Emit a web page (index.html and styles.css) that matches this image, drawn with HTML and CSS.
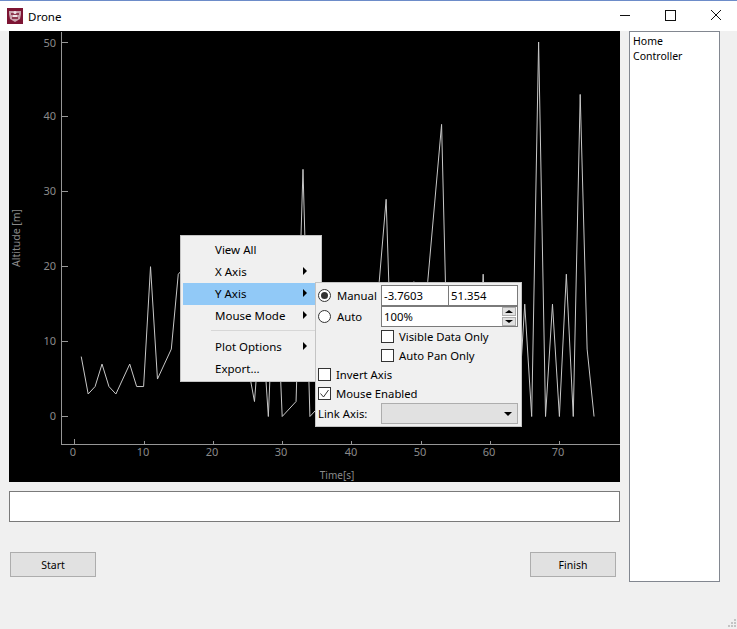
FILE: index.html
```html
<!DOCTYPE html>
<html lang="en">

<head>
  <meta charset="UTF-8">
  <title>Drone</title>
  <link rel="stylesheet" href="styles.css">
</head>

<body>
  <div class="titlebar">
    <svg class="app-icon" width="16" height="16" viewBox="0 0 16 16">
      <rect width="16" height="16" fill="#7d1433" />
      <path d="M2 3h12v3l-1 5-5 3-5-3-1-5z" fill="#c9a3ad" />
      <path d="M4 5h8v2H4zM5 9h6v2H5z" fill="#8f3a50" />
      <circle cx="8" cy="4.5" r="1.5" fill="#efe3e6" />
      <rect x="6" y="7" width="4" height="2" fill="#efe3e6" />
    </svg>
    <span class="title">Drone</span>
    <div class="controls">
      <svg width="46" height="30" viewBox="0 0 46 30"><path class="glyph" d="M19 14.5h10" /></svg>
      <svg width="46" height="30" viewBox="0 0 46 30"><path class="glyph" d="M18.5 9.5h10v10h-10z" /></svg>
      <svg width="46" height="30" viewBox="0 0 46 30"><path class="glyph" d="M18 9l10 10M28 9l-10 10" /></svg>
    </div>
  </div>

  <div class="content">
    <div class="main">
      <svg class="plot" width="611" height="451" viewBox="9 31 611 451">
        <g class="axis">
          <path d="M61.5 32V444.5H620" />
          <path d="M62 416.5h6M62 341.5h6M62 266.5h6M62 191.5h6M62 116.5h6M62 42.5h6" />
          <path d="M74.5 444v-5M144.5 444v-3M213.5 444v-3M282.5 444v-3M351.5 444v-3M421.5 444v-3M490.5 444v-3M559.5 444v-3" />
        </g>
        <g class="ticks-y">
          <text x="56" y="420">0</text>
          <text x="56" y="345">10</text>
          <text x="56" y="270">20</text>
          <text x="56" y="195">30</text>
          <text x="56" y="120">40</text>
          <text x="56" y="47">50</text>
        </g>
        <g class="ticks-x">
          <text x="73" y="456">0</text>
          <text x="143" y="456">10</text>
          <text x="212" y="456">20</text>
          <text x="281" y="456">30</text>
          <text x="351" y="456">40</text>
          <text x="420" y="456">50</text>
          <text x="489" y="456">60</text>
          <text x="558" y="456">70</text>
        </g>
        <text class="axis-label axis-label-x" x="337" y="479">Time[s]</text>
        <text class="axis-label axis-label-y" transform="translate(20 238) rotate(-90)">Altitude [m]</text>
        <!-- one point per second: time, altitude -->
        <polyline class="trace" transform="translate(74.3 416.5) scale(6.93 -7.49)"
          points="1,8 2,3 3,4 4,7 5,4 6,3 7,5 8,7 9,4 10,4 11,20 12,5 13,7 14,9 15,19 16,20 17,12 18,8 19,15 20,6 21,10 22,14 23,7 24,9 25,7 26,2 27,14 28,0 29,22 30,0 31,1 32,2 33,33 34,0 35,1 36,9 37,14 38,6 39,11 40,3 41,8 42,12 43,4 44,18 45,29 46,0 47,7 48,11 49,18 50,6 51,18 52,28.5 53,39 54,1 55,8 56,13 57,5 58,0 59,19 60,0 61,7 62,12 63,4 64,0 65,15 66,0 67,50 68,0 69,15 70,0 71,19 72,0 73,43 74,9 75,0" />
      </svg>
      <input class="command" type="text">
      <div class="buttons">
        <button class="btn">Start</button>
        <button class="btn">Finish</button>
      </div>
    </div>
    <ul class="sidebar">
      <li>Home</li>
      <li>Controller</li>
    </ul>
  </div>

  <div class="menu">
    <div class="menu-item">View All</div>
    <div class="menu-item has-sub">X Axis</div>
    <div class="menu-item has-sub active">Y Axis</div>
    <div class="menu-item has-sub">Mouse Mode</div>
    <div class="menu-sep"></div>
    <div class="menu-item has-sub">Plot Options</div>
    <div class="menu-item">Export...</div>
  </div>

  <div class="submenu">
    <label class="opt"><span class="radio on"></span>Manual</label>
    <div class="field">-3.7603</div>
    <div class="field field-max">51.354</div>

    <label class="opt"><span class="radio"></span>Auto</label>
    <div class="field field-spin">100%
      <span class="spin">
        <span class="spin-btn"><i class="tri-up"></i></span>
        <span class="spin-btn"><i class="tri-down"></i></span>
      </span>
    </div>

    <label class="opt opt-indent"><span class="check"></span>Visible Data Only</label>
    <label class="opt opt-indent"><span class="check"></span>Auto Pan Only</label>
    <label class="opt opt-wide"><span class="check"></span>Invert Axis</label>
    <label class="opt opt-wide">
      <span class="check">
        <svg width="13" height="13" viewBox="0 0 13 13"><path d="M2.5 6.5l3 3.5 5-7" fill="none" stroke="#333" /></svg>
      </span>Mouse Enabled
    </label>

    <span class="opt">Link Axis:</span>
    <div class="combo"><i class="tri-combo"></i></div>
  </div>

  <svg class="grip" width="10" height="10" viewBox="0 0 10 10">
    <path d="M7 1h2v2H7zM4 4h2v2H4zM7 4h2v2H7zM1 7h2v2H1zM4 7h2v2H4zM7 7h2v2H7z" fill="#c4c4c4" />
  </svg>
</body>

</html>
```

FILE: styles.css
```css
html,
body {
  margin: 0;
  height: 100%;
}

body {
  position: relative;
  overflow: hidden;
  background: #f0f0f0;
  color: #000;
  font: 12px "Noto Sans", sans-serif;
}

.titlebar {
  display: flex;
  align-items: center;
  height: 30px;
  background: #fff;
  border-top: 1px solid #6d8cc9;
}

.app-icon {
  margin-left: 7px;
}

.title {
  margin-left: 5px;
  font-size: 11.5px;
}

.controls {
  display: flex;
  margin-left: auto;
  margin-right: -2px;
}

.glyph {
  fill: none;
  stroke: #111;
  stroke-width: 1;
  shape-rendering: crispEdges;
}

.controls svg:last-child .glyph {
  shape-rendering: auto;
}

.content {
  display: flex;
  gap: 9px;
  padding-left: 9px;
}

.main {
  display: flex;
  flex-direction: column;
  width: 611px;
}

.plot {
  display: block;
  background: #000;
}

.axis path {
  fill: none;
  stroke: #969696;
  shape-rendering: crispEdges;
}

.ticks-y text,
.ticks-x text,
.axis-label {
  fill: #8a8a8a;
  font-size: 11px;
}

.ticks-y text {
  text-anchor: end;
}

.ticks-x text,
.axis-label {
  text-anchor: middle;
}

.axis-label-x {
  font-size: 10px;
}

.axis-label-y {
  font-size: 10.5px;
}

.trace {
  fill: none;
  stroke: #c8c8c8;
  stroke-width: 1;
  vector-effect: non-scaling-stroke;
  shape-rendering: crispEdges;
}

.command {
  box-sizing: border-box;
  width: 611px;
  height: 31px;
  margin-top: 9px;
  border: 1px solid #7a7a7a;
  background: #fff;
  outline: none;
}

.buttons {
  display: flex;
  justify-content: space-between;
  margin-top: 30px;
  padding: 0 4px 0 1px;
}

.btn {
  width: 86px;
  height: 25px;
  padding: 0;
  border: 1px solid #adadad;
  background: #e1e1e1;
  color: #000;
  font: inherit;
  font-size: 10.5px;
}

.sidebar {
  box-sizing: border-box;
  width: 91px;
  height: 551px;
  margin: 0;
  padding: 2px 3px;
  list-style: none;
  border: 1px solid #828790;
  background: #fff;
  font-size: 10.5px;
}

.sidebar li {
  height: 15px;
  line-height: 15px;
}

/* popup menu over the plot */
.menu {
  position: absolute;
  left: 180px;
  top: 235px;
  box-sizing: border-box;
  width: 142px;
  height: 147px;
  padding: 3px 2px;
  border: 1px solid #c4c4c4;
  background: #f0f0f0;
  font-size: 11.5px;
}

.menu-item {
  position: relative;
  height: 22px;
  padding-left: 32px;
  line-height: 22px;
}

.menu-item.active {
  background: #91c9f7;
}

.has-sub::after {
  content: "";
  position: absolute;
  right: 12px;
  top: 6px;
  border-left: 4px solid #000;
  border-top: 4px solid transparent;
  border-bottom: 4px solid transparent;
}

.menu-sep {
  height: 1px;
  margin: 3px -1px 5px 28px;
  background: #d7d7d7;
}

/* Y Axis options panel */
.submenu {
  position: absolute;
  left: 315px;
  top: 282px;
  box-sizing: border-box;
  display: grid;
  grid-template-columns: 63px 68px 69px;
  grid-template-rows: 21px 21px 19px 19px 19px 19px 21px;
  width: 207px;
  height: 145px;
  padding: 2px;
  border: 1px solid #c4c4c4;
  background: #f0f0f0;
  font-size: 11.3px;
}

.opt {
  display: flex;
  align-items: center;
  gap: 5px;
  white-space: nowrap;
}

.opt-indent {
  grid-column: 2 / 4;
}

.opt-wide {
  grid-column: 1 / 4;
}

.radio {
  box-sizing: border-box;
  display: flex;
  align-items: center;
  justify-content: center;
  width: 13px;
  height: 13px;
  margin-right: 1px;
  border: 1px solid #333;
  border-radius: 50%;
  background: #fff;
}

.radio.on::after {
  content: "";
  width: 7px;
  height: 7px;
  border-radius: 50%;
  background: #333;
}

.check {
  box-sizing: border-box;
  display: block;
  width: 13px;
  height: 13px;
  border: 1px solid #333;
  background: #fff;
}

.check svg {
  display: block;
  margin: -1px;
}

.field {
  box-sizing: border-box;
  position: relative;
  height: 21px;
  padding-left: 2px;
  border: 1px solid #7a7a7a;
  background: #fff;
  line-height: 19px;
}

.field-max {
  margin-left: -1px;
}

.field-spin {
  grid-column: 2 / 4;
  width: 137px;
}

.spin {
  position: absolute;
  right: 1px;
  top: 0;
  display: flex;
  flex-direction: column;
}

.spin-btn {
  box-sizing: border-box;
  display: flex;
  align-items: center;
  justify-content: center;
  width: 14px;
  height: 9px;
  border: 1px solid #adadad;
  background: #e1e1e1;
}

.spin-btn + .spin-btn {
  margin-top: 1px;
}

.tri-up,
.tri-down,
.tri-combo {
  display: block;
  border-left: 4px solid transparent;
  border-right: 4px solid transparent;
}

.tri-up {
  border-bottom: 3px solid #000;
}

.tri-down {
  border-top: 3px solid #000;
}

.tri-combo {
  border-top: 4px solid #000;
}

.combo {
  box-sizing: border-box;
  grid-column: 2 / 4;
  display: flex;
  align-items: center;
  justify-content: flex-end;
  width: 137px;
  height: 21px;
  padding-right: 5px;
  border: 1px solid #adadad;
  background: #e1e1e1;
}

.grip {
  position: absolute;
  right: 0;
  bottom: 1px;
}
```
